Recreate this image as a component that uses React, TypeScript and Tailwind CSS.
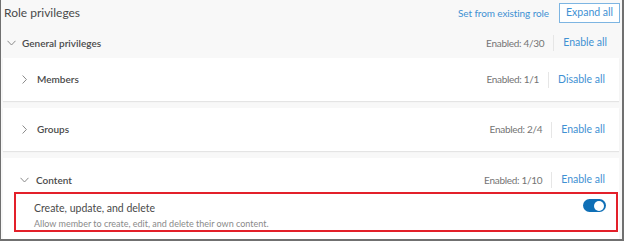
type Group = {
  name: string
  enabled: string
  action: string
}

const groups: Group[] = [
  { name: "Members", enabled: "1/1", action: "Disable all" },
  { name: "Groups", enabled: "2/4", action: "Enable all" },
]

function ChevronDown() {
  return (
    <svg width="9" height="6" viewBox="0 0 9 6" fill="none" className="text-[#8a8a8a]">
      <path d="M0.5 0.8 4.5 5 8.5 0.8" stroke="currentColor" strokeWidth="1" />
    </svg>
  )
}

function ChevronRight() {
  return (
    <svg width="5" height="9" viewBox="0 0 5 9" fill="none" className="text-[#8a8a8a]">
      <path d="M0.6 0.5 4.4 4.5 0.6 8.5" stroke="currentColor" strokeWidth="1" />
    </svg>
  )
}

function Counter({ enabled, action }: { enabled: string; action: string }) {
  return (
    <div className="flex items-center">
      <span className="text-[10px] tracking-[-0.3px] text-[#747474]">Enabled: {enabled}</span>
      <span className="mx-[9px] h-[16px] w-px bg-[#e6e6e6]" />
      <button className="text-[10.5px] text-[#3f91d3]">{action}</button>
    </div>
  )
}

function Toggle({ on }: { on: boolean }) {
  return (
    <span
      className={`flex h-[13px] w-[23px] items-center rounded-full px-[2px] ${on ? "justify-end bg-[#0f6fb6]" : "justify-start bg-[#ccc]"}`}
    >
      <span className="h-[10px] w-[10px] rounded-full bg-white" />
    </span>
  )
}

export default function App() {
  return (
    <div className="h-[241px] w-[624px] overflow-hidden border-b-2 border-l border-r-2 border-[#707070] bg-[#f8f8f8] font-['Lato',sans-serif] text-[#4a4a4a]">
      {/* header */}
      <div className="flex h-[28px] items-start justify-between pl-[3px] pr-[2px] pt-[3px]">
        <h1 className="text-[12px] leading-[20px]">Role privileges</h1>
        <div className="flex items-center">
          <button className="mr-[10px] text-[10px] tracking-[-0.1px] text-[#3f91d3]">Set from existing role</button>
          <button className="h-[20px] w-[61px] border border-[#7db5e2] bg-white text-[10.5px] text-[#3f91d3]">
            Expand all
          </button>
        </div>
      </div>

      {/* general privileges */}
      <div className="flex h-[30px] items-center justify-between pl-[6px] pr-[15px]">
        <div className="flex items-center gap-[6px]">
          <ChevronDown />
          <span className="text-[10px] font-semibold">General privileges</span>
        </div>
        <Counter enabled="4/30" action="Enable all" />
      </div>

      <div className="flex flex-col gap-[7px] pl-[2px] pr-[3px]">
        {groups.map((g) => (
          <div
            key={g.name}
            className="flex h-[43px] items-center justify-between bg-white pl-[19px] pr-[14px] shadow-[0_1px_1px_rgba(0,0,0,0.08)]"
          >
            <div className="flex items-center gap-[10px]">
              <ChevronRight />
              <span className="text-[10px] font-semibold">{g.name}</span>
            </div>
            <Counter enabled={g.enabled} action={g.action} />
          </div>
        ))}

        <div className="bg-white pb-[8px] pl-[11px] pr-[1px]">
          <div className="flex h-[34px] items-center justify-between pl-[6px] pr-[13px] pt-[10px]">
            <div className="flex items-center gap-[7px]">
              <ChevronDown />
              <span className="text-[10px] font-semibold">Content</span>
            </div>
            <Counter enabled="1/10" action="Enable all" />
          </div>
          <div className="flex h-[40px] justify-between border-2 border-[#e3202a] pl-[18px] pr-[10px]">
            <div className="flex flex-col pt-[6px]">
              <span className="text-[10.5px] leading-[16px]">Create, update, and delete</span>
              <span className="text-[9px] leading-[16px] text-[#8a8a8a]">
                Allow member to create, edit, and delete their own content.
              </span>
            </div>
            <div className="pt-[5px]">
              <Toggle on />
            </div>
          </div>
        </div>
      </div>
    </div>
  )
}
